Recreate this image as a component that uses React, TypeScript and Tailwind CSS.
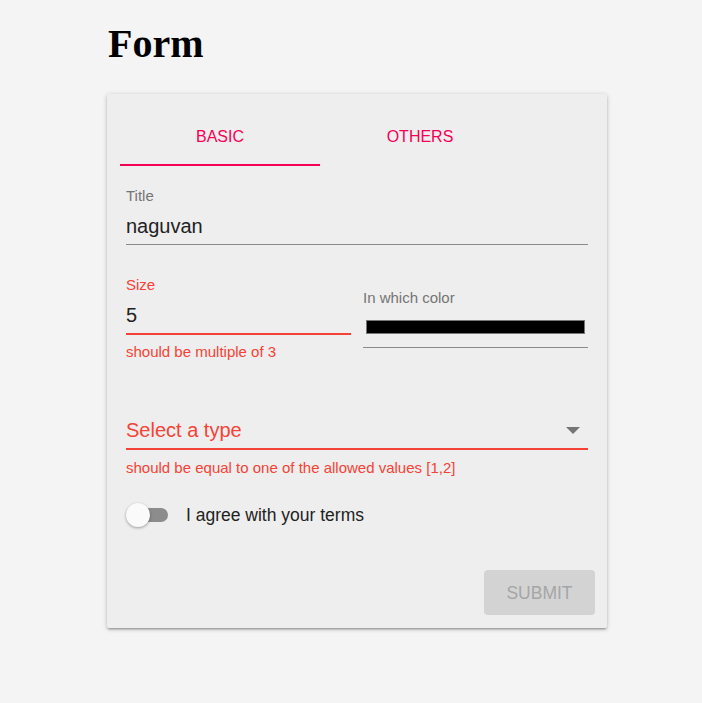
import { useState } from 'react';

const tabs = ['BASIC', 'OTHERS'];

export default function App() {
  const [tab, setTab] = useState(0);
  const [agree, setAgree] = useState(false);

  return (
    <div className="min-h-[703px] bg-[#f4f4f4] font-['Liberation_Sans',Arial,sans-serif]">
      <div className="ml-[107px] w-[500px] pt-[21px]">
        <h1 className="ml-[1px] font-['Liberation_Serif','Times_New_Roman',serif] text-[40px] font-bold leading-[46px] text-black">
          Form
        </h1>

        <div className="mt-[27px] rounded-[2px] bg-[#eeeeee] px-[13px] pt-[13px] pb-[13px] shadow-[0_1px_5px_rgba(0,0,0,0.2),0_2px_2px_rgba(0,0,0,0.14),0_3px_1px_-2px_rgba(0,0,0,0.12)]">
          {/* tabs */}
          <div className="flex h-[59px]">
            {tabs.map((t, i) => (
              <button
                key={t}
                onClick={() => setTab(i)}
                className="flex w-[200px] flex-col text-[16px] text-[#f50057]"
              >
                <span className="flex flex-1 items-center justify-center pt-[3px]">{t}</span>
                <span className={tab === i ? 'h-[2px] w-full bg-[#f50057]' : 'h-[2px] w-full'} />
              </button>
            ))}
          </div>

          <div className="px-[6px] pt-[21px]">
            {/* title */}
            <div>
              <div className="text-[15px] leading-[18px] text-[#757575]">Title</div>
              <div className="mt-[9px] border-b border-[#8a8a8a] pb-[6px] text-[20px] leading-[24px] text-[#222222]">
                naguvan
              </div>
            </div>

            {/* size + color */}
            <div className="mt-[31px] flex items-start gap-[12px]">
              <div className="w-[225px]">
                <div className="text-[15px] leading-[18px] text-[#f44336]">Size</div>
                <div className="mt-[9px] border-b-2 border-[#f44336] pb-[6px] text-[20px] leading-[24px] text-[#222222]">
                  5
                </div>
                <div className="mt-[8px] text-[15px] leading-[18px] text-[#f44336]">should be multiple of 3</div>
              </div>
              <div className="mt-[13px] w-[225px]">
                <div className="text-[15px] leading-[18px] text-[#757575]">In which color</div>
                <div className="border-b border-[#8a8a8a] px-[3px] pt-[13px] pb-[13px]">
                  <div className="h-[14px] w-full border border-[#767676] bg-black" />
                </div>
              </div>
            </div>

            {/* select */}
            <div className="mt-[57px]">
              <div className="flex items-center justify-between border-b-2 border-[#f44336] pb-[6px]">
                <span className="text-[20px] leading-[24px] text-[#f44336]">Select a type</span>
                <svg className="mr-[8px] h-[7px] w-[14px]" viewBox="0 0 10 5">
                  <path d="M0 0l5 5 5-5z" fill="#757575" />
                </svg>
              </div>
              <div className="mt-[9px] text-[15px] leading-[18px] text-[#f44336]">
                should be equal to one of the allowed values [1,2]
              </div>
            </div>

            {/* switch */}
            <div className="mt-[26px] flex items-center gap-[18px]">
              <button onClick={() => setAgree(!agree)} className="relative h-[24px] w-[42px]">
                <span className={agree ? 'absolute left-[8px] top-[5px] h-[14px] w-[34px] rounded-full bg-[#f9a8c4]' : 'absolute left-[8px] top-[5px] h-[14px] w-[34px] rounded-full bg-[#8c8c8c]'} />
                <span
                  className={
                    agree
                      ? 'absolute left-[18px] top-0 h-[24px] w-[24px] rounded-full bg-[#f50057] shadow-[0_1px_3px_rgba(0,0,0,0.35)]'
                      : 'absolute left-0 top-0 h-[24px] w-[24px] rounded-full bg-[#fafafa] shadow-[0_1px_3px_rgba(0,0,0,0.35)]'
                  }
                />
              </button>
              <span className="text-[17.5px] leading-[24px] text-[#222222]">I agree with your terms</span>
            </div>
          </div>

          {/* submit */}
          <div className="mt-[43px] flex justify-end">
            <button
              disabled
              className="mr-[-1px] h-[45px] w-[111px] rounded-[4px] bg-[#d3d3d3] pt-[1px] text-[17.5px] text-[#a6a6a6]"
            >
              SUBMIT
            </button>
          </div>
        </div>
      </div>
    </div>
  );
}
